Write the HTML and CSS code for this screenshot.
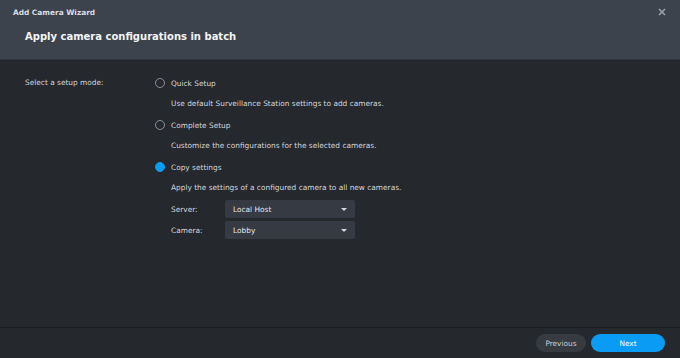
FILE: index.html
```html
<!DOCTYPE html>
<html>
<head>
<meta charset="utf-8">
<link rel="stylesheet" href="styles.css">
</head>
<body>
<div class="win">
  <div class="header">
    <div class="titlebar">
      <span class="wtitle">Add Camera Wizard</span>
      <span class="close"><svg width="8" height="8" viewBox="0 0 8 8"><path d="M1 1L7 7M7 1L1 7" stroke="#9aa1ab" stroke-width="1.6"/></svg></span>
    </div>
    <div class="heading">Apply camera configurations in batch</div>
  </div>
  <div class="body">
    <div class="form">
      <div class="label">Select a setup mode:</div>
      <div class="options">
        <div class="opt"><span class="radio"></span><span>Quick Setup</span></div>
        <div class="desc">Use default Surveillance Station settings to add cameras.</div>
        <div class="opt"><span class="radio"></span><span>Complete Setup</span></div>
        <div class="desc">Customize the configurations for the selected cameras.</div>
        <div class="opt"><span class="radio on"></span><span>Copy settings</span></div>
        <div class="desc">Apply the settings of a configured camera to all new cameras.</div>
        <div class="fields">
          <div class="field"><span class="flabel">Server:</span><div class="select"><span>Local Host</span><span class="caret"></span></div></div>
          <div class="field"><span class="flabel">Camera:</span><div class="select"><span>Lobby</span><span class="caret"></span></div></div>
        </div>
      </div>
    </div>
  </div>
  <div class="footer">
    <button class="btn prev">Previous</button>
    <button class="btn next">Next</button>
  </div>
</div>
</body>
</html>
```
FILE: styles.css
```css
html, body { margin: 0; padding: 0; }
body { width: 680px; height: 358px; overflow: hidden; background: #25282d; font-family: "DejaVu Sans", Verdana, sans-serif; font-size: 7.4px; color: #d3d7dd; }
.win { display: flex; flex-direction: column; height: 358px; }
.header { background: #3d434d; height: 59px; box-sizing: border-box; }
.titlebar { display: flex; justify-content: space-between; align-items: center; height: 24px; padding: 0 14px 0 13px; }
.wtitle { font-weight: bold; font-size: 7.4px; color: #d9dde2; }
.close { display: flex; }
.heading { padding-left: 25px; font-weight: bold; font-size: 10px; color: #f2f4f6; line-height: 30px; margin-top: -2px; }
.body { flex: 1; border-top: 1px solid #30343b; }
.form { display: flex; padding: 16px 0 0 25px; }
.label { width: 130px; line-height: 14px; }
.options { display: flex; flex-direction: column; }
.opt { display: flex; align-items: center; gap: 6px; height: 14px; }
.radio { border: 1px solid #8a9099; border-radius: 50%; box-sizing: border-box; width: 10px; height: 10px; }
.radio.on { background: #0a9cf5; border-color: #0a9cf5; }
.desc { margin: 7px 0 7px 16px; line-height: 14px; }
.fields { display: flex; flex-direction: column; gap: 3px; margin-left: 16px; margin-top: -2px; }
.field { display: flex; align-items: center; }
.flabel { width: 54px; }
.select { width: 130px; height: 18px; background: #353a43; border-radius: 2px; display: flex; align-items: center; justify-content: space-between; padding: 0 8px; box-sizing: border-box; color: #e6e9ed; }
.caret { width: 0; height: 0; border-left: 3px solid transparent; border-right: 3px solid transparent; border-top: 3px solid #d6dae0; }
.footer { height: 30px; border-top: 1px solid #1b1d21; display: flex; justify-content: flex-end; align-items: center; gap: 5px; padding-right: 15px; }
.btn { font-family: inherit; font-size: 7.4px; height: 18px; border: none; border-radius: 9px; color: #e8ebef; padding: 0; }
.prev { width: 50px; background: #363a41; color: #c9cdd3; }
.next { width: 74px; background: #0a9cf5; color: #fff; }
```
